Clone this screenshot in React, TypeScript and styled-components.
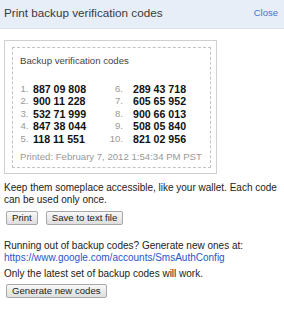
import React from 'react';
import styled, { createGlobalStyle } from 'styled-components';

const GlobalStyle = createGlobalStyle`
  html, body {
    margin: 0;
    padding: 0;
    background: #ffffff;
  }
  body {
    font-family: 'Liberation Sans', Arial, sans-serif;
    color: #222;
  }
`;

const Dialog = styled.div`
  width: 284px;
  height: 320px;
  overflow: hidden;
  background: #fff;
`;

const Header = styled.div`
  display: flex;
  align-items: center;
  justify-content: space-between;
  height: 29px;
  padding: 0 6px 3px 4px;
  box-sizing: border-box;
  background: #e8eef8;
  border-bottom: 1px solid #dde3ee;
`;

const Title = styled.div`
  font-size: 11.7px;
  color: #3a3a3a;
`;

const CloseLink = styled.a`
  font-size: 9.5px;
  color: #4a72cc;
  text-decoration: none;
`;

const Body = styled.div`
  padding: 11px 0 0 4px;
`;

const CodesBox = styled.div`
  width: 213px;
  box-sizing: border-box;
  border: 1px solid #d0d0d0;
  padding: 6px 5px 5px 7px;
`;

const CodesInner = styled.div`
  border: 1px dashed #c4c4c4;
  padding: 7px 0 4px 7px;
`;

const BoxTitle = styled.div`
  font-size: 9.6px;
  line-height: 12px;
  color: #444;
`;

const CodesGrid = styled.div`
  display: grid;
  grid-template-columns: 13px 75px 25px auto;
  margin-top: 16px;
  line-height: 12.4px;
`;

const Num = styled.span<{ $gap: number }>`
  font-size: 9.6px;
  color: #999;
  text-align: right;
  padding-right: ${(p) => p.$gap}px;
`;

const Code = styled.span`
  font-size: 10.6px;
  font-weight: bold;
  color: #111;
`;

const Printed = styled.div`
  margin-top: 6px;
  font-size: 9.6px;
  line-height: 12px;
  color: #999;
`;

const Para = styled.p<{ $top?: number }>`
  margin: ${(p) => p.$top ?? 0}px 0 0 0;
  font-size: 10px;
  line-height: 11.6px;
  color: #222;
`;

const ButtonRow = styled.div<{ $top: number }>`
  display: flex;
  align-items: flex-start;
  gap: 8px;
  margin: ${(p) => p.$top}px 0 0 2px;
`;

const Button = styled.button`
  font-family: 'Liberation Sans', Arial, sans-serif;
  font-size: 9.6px;
  color: #222;
  height: 14px;
  line-height: 12px;
  padding: 0 5px;
  border: 1px solid #a8a8a8;
  border-radius: 2px;
  background: linear-gradient(#f8f8f8, #dedede);
  box-sizing: border-box;
`;

const Link = styled.a`
  color: #2a55c8;
  text-decoration: none;
`;

const codes: [string, string][] = [
  ['887 09 808', '289 43 718'],
  ['900 11 228', '605 65 952'],
  ['532 71 999', '900 66 013'],
  ['847 38 044', '508 05 840'],
  ['118 11 551', '821 02 956'],
];

const App: React.FC = () => {
  return (
    <>
      <GlobalStyle />
      <Dialog>
        <Header>
          <Title>Print backup verification codes</Title>
          <CloseLink href="#">Close</CloseLink>
        </Header>
        <Body>
          <CodesBox>
            <CodesInner>
              <BoxTitle>Backup verification codes</BoxTitle>
              <CodesGrid>
                {codes.map(([a, b], i) => (
                  <React.Fragment key={i}>
                    <Num $gap={4.5}>{i + 1}.</Num>
                    <Code>{a}</Code>
                    <Num $gap={10}>{i + 6}.</Num>
                    <Code>{b}</Code>
                  </React.Fragment>
                ))}
              </CodesGrid>
              <Printed>Printed: February 7, 2012 1:54:34 PM PST</Printed>
            </CodesInner>
          </CodesBox>
          <Para $top={8}>
            Keep them someplace accessible, like your wallet. Each code can be used only once.
          </Para>
          <ButtonRow $top={6}>
            <Button>Print</Button>
            <Button>Save to text file</Button>
          </ButtonRow>
          <Para $top={15}>
            Running out of backup codes? Generate new ones at:
            <br />
            <Link href="#">https://www.google.com/accounts/SmsAuthConfig</Link>
          </Para>
          <Para $top={5}>Only the latest set of backup codes will work.</Para>
          <ButtonRow $top={4}>
            <Button>Generate new codes</Button>
          </ButtonRow>
        </Body>
      </Dialog>
    </>
  );
};

export default App;
